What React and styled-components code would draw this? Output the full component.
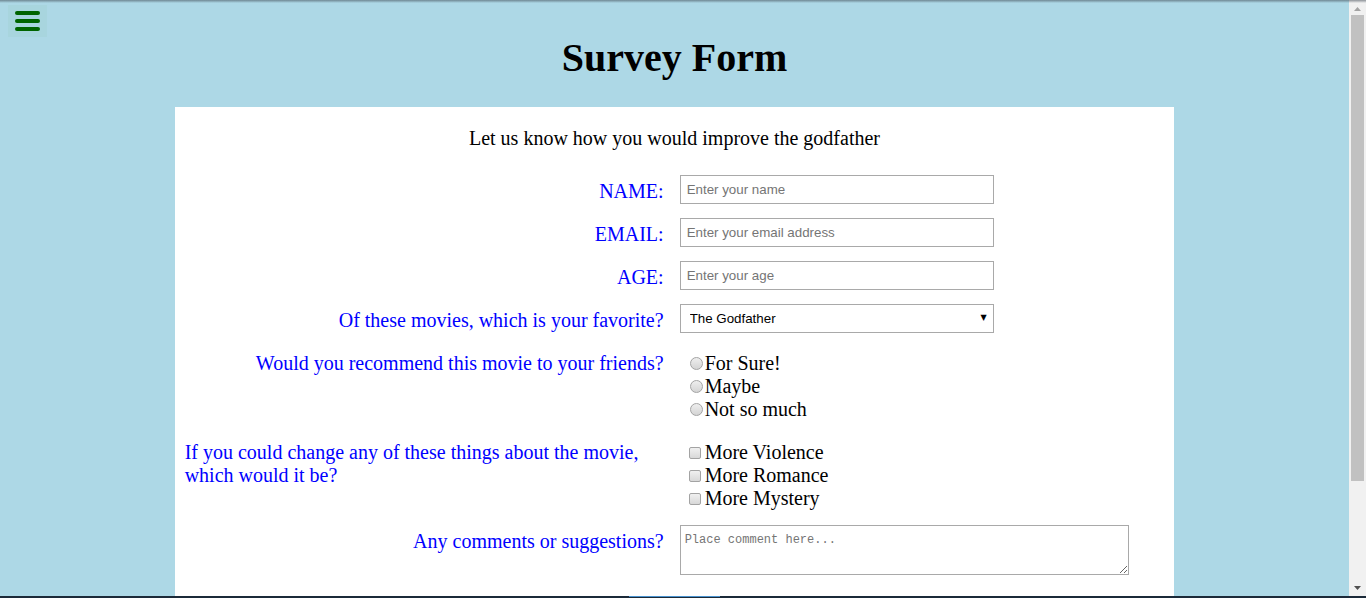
import React from "react";
import styled, { createGlobalStyle } from "styled-components";

const GlobalStyle = createGlobalStyle`
  html, body {
    margin: 0;
    padding: 0;
    overflow: hidden;
  }
  body {
    font-family: "Liberation Serif", "Times New Roman", serif;
  }
`;

const Screen = styled.div`
  position: relative;
  display: flex;
  flex-direction: column;
  width: 100vw;
  height: 100vh;
  background: #1b2a39;

  &::after {
    content: "";
    position: absolute;
    left: 0;
    right: 0;
    top: 0;
    height: 3px;
    background: linear-gradient(rgba(60, 70, 80, 0.55), rgba(60, 70, 80, 0));
    pointer-events: none;
  }
`;

const Viewport = styled.div`
  display: flex;
  flex: 1;
  min-height: 0;
`;

const Page = styled.main`
  flex: 1;
  min-width: 0;
  overflow: hidden;
  background: #add8e6;
  padding: 0 8px;
`;

const MenuToggle = styled.button`
  position: absolute;
  top: 5px;
  left: 8px;
  display: flex;
  flex-direction: column;
  gap: 4px;
  padding: 6px 7px;
  border: none;
  background: #a8d5de;
  cursor: pointer;
  z-index: 2;
`;

const MenuBar = styled.span`
  display: block;
  width: 25px;
  height: 4px;
  border-radius: 2px;
  background: #006400;
`;

const Title = styled.h1`
  margin: 0 0 27px;
  padding-top: 36px;
  font-size: 40px;
  line-height: 44px;
  font-weight: bold;
  text-align: center;
  color: #000;
`;

const FormCard = styled.form`
  width: 75%;
  margin: 0 auto;
  padding: 20px 10px;
  box-sizing: border-box;
  background: #fff;
`;

const Intro = styled.p`
  margin: 0 0 26px;
  font-size: 20px;
  line-height: 22px;
  text-align: center;
`;

const Row = styled.div`
  display: grid;
  grid-template-columns: 479px 1fr;
  column-gap: 16px;
  margin-bottom: ${(p) => p.$gap || 14}px;
`;

const Label = styled.label`
  padding-top: 5px;
  font-size: 20px;
  line-height: 23px;
  color: #0000ff;
  text-align: ${(p) => (p.$left ? "left" : "right")};
`;

const TextInput = styled.input`
  width: 314px;
  height: 29px;
  box-sizing: border-box;
  border: 1px solid #a9a9a9;
  padding: 0 6px;
  font-family: "Liberation Sans", Arial, sans-serif;
  font-size: 13.33px;
  color: #000;
  outline: none;

  &::placeholder {
    color: #757575;
  }
`;

const SelectWrap = styled.div`
  position: relative;
  width: 314px;
`;

const Select = styled.select`
  appearance: none;
  width: 100%;
  height: 29px;
  box-sizing: border-box;
  border: 1px solid #a9a9a9;
  border-radius: 0;
  padding: 0 20px 0 9px;
  background: #fff;
  font-family: "Liberation Sans", Arial, sans-serif;
  font-size: 13.33px;
  color: #000;
  outline: none;
`;

const SelectArrow = styled.span`
  position: absolute;
  right: 7px;
  top: 9px;
  font-family: "DejaVu Sans", sans-serif;
  font-size: 8px;
  line-height: 10px;
  color: #000;
  pointer-events: none;
`;

const Choices = styled.div`
  padding: 5px 0 1px;
`;

const Choice = styled.label`
  display: flex;
  align-items: center;
  font-size: 20px;
  line-height: 23px;
  color: #000;
`;

const Radio = styled.input.attrs({ type: "radio" })`
  appearance: none;
  width: 13px;
  height: 13px;
  margin: 0 2px 0 10px;
  border: 1px solid #a3a3a3;
  border-radius: 50%;
  background: linear-gradient(#eeeeee, #d4d4d4);
`;

const Checkbox = styled.input.attrs({ type: "checkbox" })`
  appearance: none;
  width: 12px;
  height: 12px;
  margin: 0 4px 0 9px;
  border: 1px solid #a3a3a3;
  border-radius: 2px;
  background: linear-gradient(#f0f0f0, #d8d8d8);
`;

const Comments = styled.textarea`
  width: 449px;
  height: 50px;
  box-sizing: border-box;
  border: 1px solid #a9a9a9;
  padding: 7px 4px 2px;
  font-family: "Liberation Mono", "Courier New", monospace;
  font-size: 12px;
  line-height: 14px;
  outline: none;

  &::placeholder {
    color: #757575;
  }
`;

const ScrollTrack = styled.div`
  display: flex;
  flex-direction: column;
  align-items: center;
  width: 17px;
  background: #f1f1f1;
`;

const ScrollArrow = styled.div`
  display: flex;
  align-items: center;
  justify-content: center;
  width: 17px;
  height: 17px;
  flex-shrink: 0;
`;

const ScrollThumb = styled.div`
  width: 13px;
  height: 466px;
  margin-top: -2px;
  background: #c1c1c1;
`;

const ScrollSpacer = styled.div`
  flex: 1;
`;

const Taskbar = styled.div`
  display: flex;
  height: 2px;
  background: #1b2a39;
`;

const TaskbarItem = styled.div`
  width: 91px;
  margin-left: 629px;
  border-top: 1px solid #4b93cf;
`;

const movieOptions = ["The Godfather", "The Godfather Part II", "The Godfather Part III"];
const recommend = ["For Sure!", "Maybe", "Not so much"];
const changes = ["More Violence", "More Romance", "More Mystery"];

const App = () => {
  return (
    <>
      <GlobalStyle />
      <Screen>
        <MenuToggle type="button" aria-label="menu">
          <MenuBar />
          <MenuBar />
          <MenuBar />
        </MenuToggle>
        <Viewport>
          <Page>
            <Title>Survey Form</Title>
            <FormCard onSubmit={(e) => e.preventDefault()}>
              <Intro>Let us know how you would improve the godfather</Intro>

              <Row>
                <Label htmlFor="name">NAME:</Label>
                <TextInput id="name" type="text" placeholder="Enter your name" />
              </Row>
              <Row>
                <Label htmlFor="email">EMAIL:</Label>
                <TextInput id="email" type="email" placeholder="Enter your email address" />
              </Row>
              <Row>
                <Label htmlFor="age">AGE:</Label>
                <TextInput id="age" type="number" placeholder="Enter your age" />
              </Row>
              <Row>
                <Label htmlFor="movie">Of these movies, which is your favorite?</Label>
                <SelectWrap>
                  <Select id="movie" defaultValue="The Godfather">
                    {movieOptions.map((m) => (
                      <option key={m}>{m}</option>
                    ))}
                  </Select>
                  <SelectArrow>▼</SelectArrow>
                </SelectWrap>
              </Row>

              <Row>
                <Label>Would you recommend this movie to your friends?</Label>
                <Choices>
                  {recommend.map((r) => (
                    <Choice key={r}>
                      <Radio name="recommend" value={r} />
                      {r}
                    </Choice>
                  ))}
                </Choices>
              </Row>

              <Row>
                <Label $left>
                  If you could change any of these things about the movie, which would it be?
                </Label>
                <Choices>
                  {changes.map((c) => (
                    <Choice key={c}>
                      <Checkbox value={c} />
                      {c}
                    </Choice>
                  ))}
                </Choices>
              </Row>

              <Row $gap={20}>
                <Label htmlFor="comments">Any comments or suggestions?</Label>
                <div>
                  <Comments id="comments" placeholder="Place comment here..." />
                </div>
              </Row>
            </FormCard>
          </Page>

          <ScrollTrack>
            <ScrollArrow>
              <svg width="7" height="4" viewBox="0 0 7 4">
                <polygon points="3.5,0 7,4 0,4" fill="#a3a3a3" />
              </svg>
            </ScrollArrow>
            <ScrollThumb />
            <ScrollSpacer />
            <ScrollArrow>
              <svg width="7" height="4" viewBox="0 0 7 4">
                <polygon points="0,0 7,0 3.5,4" fill="#505050" />
              </svg>
            </ScrollArrow>
          </ScrollTrack>
        </Viewport>
        <Taskbar>
          <TaskbarItem />
        </Taskbar>
      </Screen>
    </>
  );
};

export default App;
